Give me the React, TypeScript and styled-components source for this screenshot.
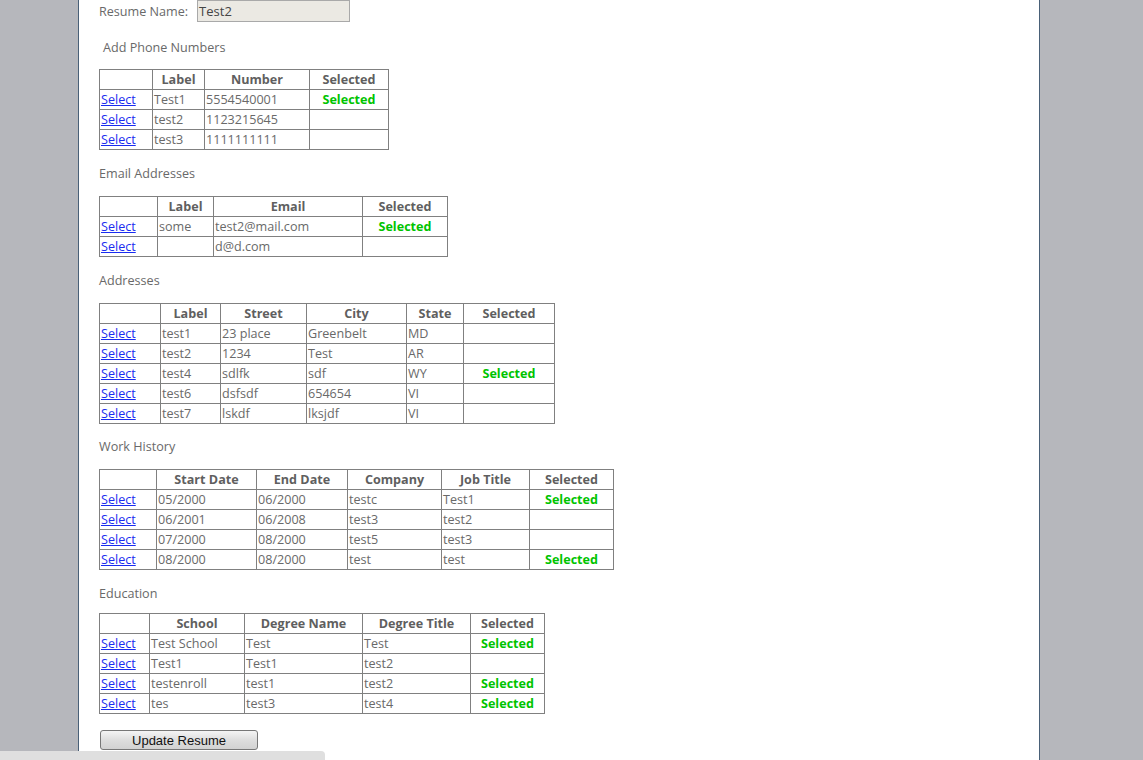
import React from 'react';
import styled, {createGlobalStyle} from 'styled-components';

const GlobalStyle = createGlobalStyle`
    body {
        margin: 0;
        background: #b6b7bc;
        font-family: "Open Sans", "Liberation Sans", sans-serif;
        font-size: 12.6px;
        color: #696969;
    }
`;

const Page = styled.div`
    width: 962px;
    min-height: 800px;
    margin-left: 78px;
    background: #fff;
    border-left: 1px solid #496077;
    border-right: 1px solid #496077;
    padding: 0 20px;
    box-sizing: border-box;
`;

const NameRow = styled.div`
    display: flex;
    align-items: center;
    gap: 9px;
    height: 22px;
`;

const NameInput = styled.div`
    width: 150px;
    height: 20px;
    margin-top: -1px;
    background: #ebe9e3;
    border: 1px solid #a9a9a9;
    color: #444;
    font-size: 13px;
    line-height: 20px;
    padding-left: 1px;
`;

const Heading = styled.div<{$indent?: number; $above?: number; $below?: number}>`
    line-height: 18px;
    padding-left: ${p => p.$indent ?? 0}px;
    margin-top: ${p => p.$above ?? 15}px;
    margin-bottom: ${p => p.$below ?? 13}px;
`;

const Grid = styled.table<{$width: number}>`
    border-collapse: collapse;
    table-layout: fixed;
    width: ${p => p.$width}px;
    border: 1px solid #808080;
`;

const Head = styled.th`
    border: 1px solid #808080;
    height: 19px;
    padding: 0 1px;
    line-height: 18px;
    font-weight: bold;
    color: #5f5f5f;
    text-align: center;
    white-space: nowrap;
`;

const Cell = styled.td`
    border: 1px solid #808080;
    height: 19px;
    padding: 0 1px;
    line-height: 18px;
    white-space: nowrap;
    overflow: hidden;
`;

const SelectLink = styled.a`
    color: #1a2cf0;
    text-decoration: underline;
    cursor: pointer;
`;

const SelectedCell = styled(Cell)`
    text-align: center;
    font-weight: bold;
    color: #00c400;
`;

const UpdateButton = styled.button`
    margin: 16px 0 0 1px;
    width: 158px;
    height: 20px;
    padding: 0;
    font-family: "Liberation Sans", Arial, sans-serif;
    font-size: 13px;
    color: #111;
    border: 1px solid #777;
    border-radius: 3px;
    background: linear-gradient(#f4f4f4, #dedede 50%, #d2d2d2);
`;

const StatusBar = styled.div`
    position: fixed;
    left: 0;
    bottom: 0;
    width: 325px;
    height: 9px;
    background: #dfdfdf;
    border-top-right-radius: 4px;
`;

type Section = {
    title: string;
    indent?: number;
    above?: number;
    below?: number;
    cols: number[];
    headers: string[];
    rows: {cells: string[]; selected: boolean}[];
};

const sections: Section[] = [
    {
        title: 'Add Phone Numbers',
        indent: 4,
        above: 17,
        below: 12,
        cols: [53, 52, 105, 79],
        headers: ['', 'Label', 'Number', 'Selected'],
        rows: [
            {cells: ['Test1', '5554540001'], selected: true},
            {cells: ['test2', '1123215645'], selected: false},
            {cells: ['test3', '1111111111'], selected: false},
        ],
    },
    {
        title: 'Email Addresses',
        cols: [58, 56, 149, 85],
        headers: ['', 'Label', 'Email', 'Selected'],
        rows: [
            {cells: ['some', 'test2@mail.com'], selected: true},
            {cells: ['', 'd@d.com'], selected: false},
        ],
    },
    {
        title: 'Addresses',
        cols: [61, 60, 86, 100, 57, 91],
        headers: ['', 'Label', 'Street', 'City', 'State', 'Selected'],
        rows: [
            {cells: ['test1', '23 place', 'Greenbelt', 'MD'], selected: false},
            {cells: ['test2', '1234', 'Test', 'AR'], selected: false},
            {cells: ['test4', 'sdlfk', 'sdf', 'WY'], selected: true},
            {cells: ['test6', 'dsfsdf', '654654', 'VI'], selected: false},
            {cells: ['test7', 'lskdf', 'lksjdf', 'VI'], selected: false},
        ],
    },
    {
        title: 'Work History',
        above: 14,
        cols: [57, 100, 91, 94, 88, 84],
        headers: ['', 'Start Date', 'End Date', 'Company', 'Job Title', 'Selected'],
        rows: [
            {cells: ['05/2000', '06/2000', 'testc', 'Test1'], selected: true},
            {cells: ['06/2001', '06/2008', 'test3', 'test2'], selected: false},
            {cells: ['07/2000', '08/2000', 'test5', 'test3'], selected: false},
            {cells: ['08/2000', '08/2000', 'test', 'test'], selected: true},
        ],
    },
    {
        title: 'Education',
        below: 10,
        cols: [50, 95, 118, 108, 74],
        headers: ['', 'School', 'Degree Name', 'Degree Title', 'Selected'],
        rows: [
            {cells: ['Test School', 'Test', 'Test'], selected: true},
            {cells: ['Test1', 'Test1', 'test2'], selected: false},
            {cells: ['testenroll', 'test1', 'test2'], selected: true},
            {cells: ['tes', 'test3', 'test4'], selected: true},
        ],
    },
];

const DataSection: React.FC<{section: Section}> = ({section}) => {
    const total = section.cols.reduce((a, b) => a + b, 0) + 1;
    return (
        <>
            <Heading $indent={section.indent} $above={section.above} $below={section.below}>
                {section.title}
            </Heading>
            <Grid $width={total}>
                <colgroup>
                    {section.cols.map((w, i) => <col key={i} style={{width: w}}/>)}
                </colgroup>
                <thead>
                    <tr>
                        {section.headers.map((h, i) => <Head key={i}>{h}</Head>)}
                    </tr>
                </thead>
                <tbody>
                    {section.rows.map((row, r) => (
                        <tr key={r}>
                            <Cell><SelectLink>Select</SelectLink></Cell>
                            {row.cells.map((c, i) => <Cell key={i}>{c}</Cell>)}
                            {row.selected ? <SelectedCell>Selected</SelectedCell> : <Cell/>}
                        </tr>
                    ))}
                </tbody>
            </Grid>
        </>
    );
};

export const App: React.FC = () => {
    return (
        <>
            <GlobalStyle/>
            <Page>
                <NameRow>
                    <span>Resume Name:</span>
                    <NameInput>Test2</NameInput>
                </NameRow>
                {sections.map(s => <DataSection key={s.title} section={s}/>)}
                <UpdateButton>Update Resume</UpdateButton>
            </Page>
            <StatusBar/>
        </>
    );
};

export default App;
